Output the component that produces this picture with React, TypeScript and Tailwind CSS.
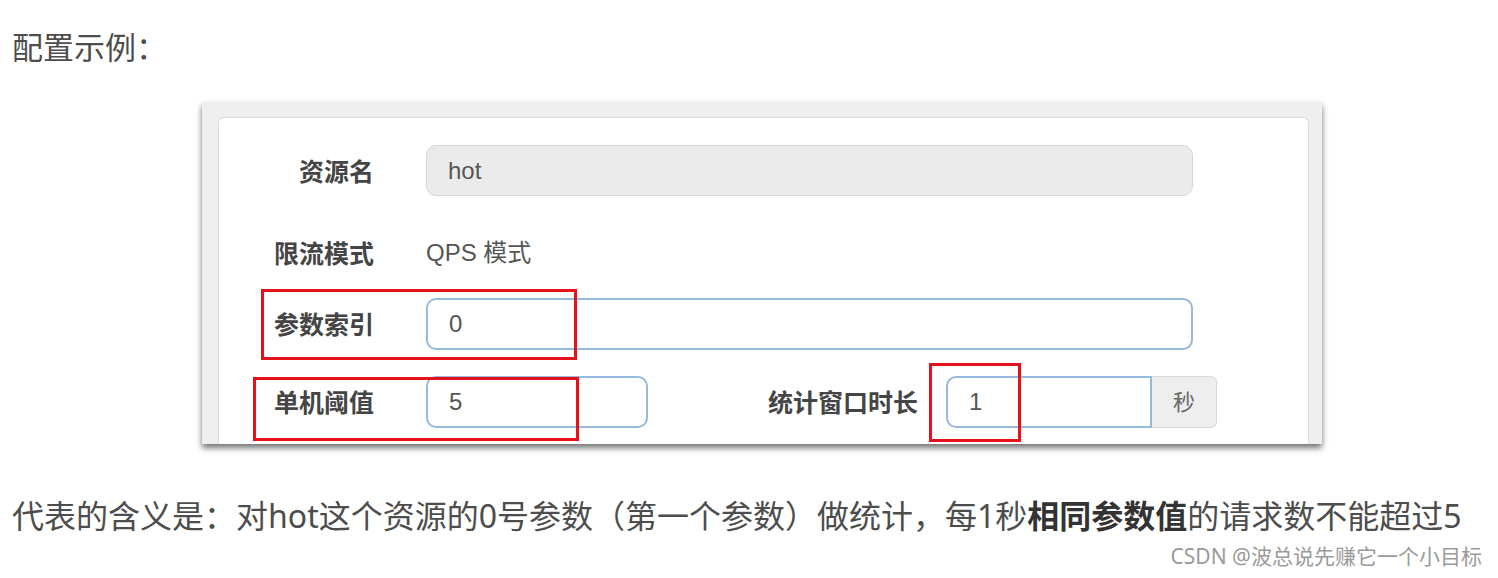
import React from 'react';

const cjk = { fontFamily: '"Noto Sans", "Noto Sans CJK SC", sans-serif' };
const form = { fontFamily: '"Liberation Sans", "Noto Sans CJK SC", sans-serif' };

const Label = ({ children }: { children: React.ReactNode }) => (
  <div className="w-[155px] shrink-0 text-right text-[25px] font-bold text-[#454545] translate-y-[2px]">
    {children}
  </div>
);

const RedBox = ({ className }: { className: string }) => (
  <div className={`absolute border-[3px] border-[#e5121c] ${className}`} />
);

export default function App() {
  return (
    <div className="relative w-[1498px] h-[578px] overflow-hidden bg-white text-[#4d4d4d]" style={cjk}>
      <div className="pl-3 pt-[25px] text-[31px] leading-[44px]">配置示例：</div>

      {/* screenshot of the rule form */}
      <div className="relative ml-[202px] mt-[33px] w-[1120px] h-[342px] pt-[15px] pl-[16px] bg-[#efefef] shadow-[0_4px_6px_rgba(0,0,0,0.55)]">
        <div className="w-[1091px] h-[327px] bg-white border border-b-0 border-[#dcdcdc] rounded-t-[6px] pt-[27px]" style={form}>
          <div className="flex items-center h-[51px]">
            <Label>资源名</Label>
            <div className="ml-[52px] w-[767px] h-[51px] flex items-center pl-[21px] rounded-[10px] bg-[#ebebeb] border border-[#d6d6d6] text-[24px] text-[#555]">
              hot
            </div>
          </div>

          <div className="flex items-center h-[52px] mt-[31px]">
            <Label>限流模式</Label>
            <div className="ml-[52px] text-[24px] text-[#555]">QPS 模式</div>
          </div>

          <div className="flex items-center h-[52px] mt-[19px]">
            <Label>参数索引</Label>
            <div className="ml-[52px] w-[767px] h-[52px] flex items-center pl-[21px] rounded-[10px] border-2 border-[#96b9de] text-[24px] text-[#555]">
              0
            </div>
          </div>

          <div className="flex items-center h-[52px] mt-[26px]">
            <Label>单机阈值</Label>
            <div className="ml-[52px] w-[222px] h-[52px] flex items-center pl-[21px] rounded-[10px] border-2 border-[#96b9de] text-[24px] text-[#555]">
              5
            </div>
            <div className="w-[270px] text-right text-[25px] font-bold text-[#454545] translate-y-[2px]">统计窗口时长</div>
            <div className="ml-[28px] w-[206px] h-[52px] flex items-center pl-[21px] rounded-l-[10px] border-2 border-[#96b9de] text-[24px] text-[#555]">
              1
            </div>
            <div className="w-[65px] h-[52px] flex items-center justify-center rounded-r-[6px] bg-[#eeeeee] border border-l-0 border-[#d9d9d9] text-[22px] text-[#666]">
              秒
            </div>
          </div>
        </div>

        <RedBox className="left-[59px] top-[187px] w-[316px] h-[71px]" />
        <RedBox className="left-[51px] top-[275px] w-[326px] h-[64px]" />
        <RedBox className="left-[727px] top-[261px] w-[92px] h-[79px]" />
      </div>

      <div className="pl-3 mt-[50px] text-[32px] leading-[44px] whitespace-nowrap">
        代表的含义是：对hot这个资源的0号参数（第一个参数）做统计，每1秒
        <span className="font-bold text-[#333]">相同参数值</span>
        的请求数不能超过5
      </div>

      <div className="absolute right-[16px] top-[542px] text-[21px] leading-[28px] text-[#9a9a9a]">
        CSDN @波总说先赚它一个小目标
      </div>
    </div>
  );
}
